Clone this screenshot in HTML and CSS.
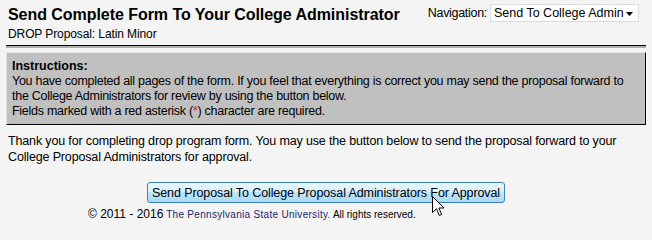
FILE: index.html
```html
<!DOCTYPE html>
<html>
<head>
<meta charset="utf-8">
<link rel="stylesheet" href="styles.css">
</head>
<body>
<div class="page">
  <div class="header">
    <div class="titles">
      <h1 class="title">Send Complete Form To Your College Administrator</h1>
      <div class="subtitle">DROP Proposal: Latin Minor</div>
    </div>
    <div class="nav">
      <span class="nav-label">Navigation:</span>
      <div class="select">
        <span>Send To College Admin</span>
        <svg class="caret" width="7" height="4" viewBox="0 0 7 4"><path d="M0 0H7L3.5 4Z" fill="#000"/></svg>
      </div>
    </div>
  </div>
  <div class="rule"></div>
  <div class="instructions">
    <div class="ins-title">Instructions:</div>
    <div>You have completed all pages of the form. If you feel that everything is correct you may send the proposal forward to the College Administrators for review by using the button below.</div>
    <div>Fields marked with a red asterisk (<span class="req">*</span>) character are required.</div>
  </div>
  <p class="thanks">Thank you for completing drop program form. You may use the button below to send the proposal forward to your College Proposal Administrators for approval.</p>
  <div class="actions">
    <button class="send">Send Proposal To College Proposal Administrators For Approval</button>
  </div>
  <div class="footer"><span class="copy">© 2011 - 2016</span> <span class="psu">The Pennsylvania State University.</span> <span class="rights">All rights reserved.</span></div>
</div>
<svg class="cursor" width="13" height="21" viewBox="0 0 13 21"><path d="M0.5 0.5V16.5L4.5 12.7L7.3 19.5L9.6 18.5L6.9 12H12Z" fill="#fff" stroke="#000" stroke-width="1" stroke-linejoin="miter"/></svg>
</body>
</html>
```
FILE: styles.css
```css
html, body {
  margin: 0;
  padding: 0;
  background: #f4f4f4;
}
body {
  font-family: "Liberation Sans", Arial, sans-serif;
  font-size: 12.5px;
  color: #000;
  position: relative;
  height: 225px;
  overflow: hidden;
}
.page {
  padding: 0 6px;
}
.header {
  display: flex;
  justify-content: space-between;
  align-items: flex-start;
  padding: 5px 7px 0 2px;
}
.titles {
  white-space: nowrap;
}
.title {
  margin: 0;
  font-size: 16px;
  letter-spacing: -0.05px;
  font-weight: bold;
  line-height: 20px;
}
.subtitle {
  margin-top: 2px;
  font-size: 12px;
  letter-spacing: -0.1px;
  line-height: 15px;
}
.nav {
  display: flex;
  align-items: center;
  gap: 3px;
  margin-top: -1px;
  white-space: nowrap;
}
.nav-label {
  letter-spacing: -0.3px;
}
.select {
  display: flex;
  align-items: center;
  justify-content: space-between;
  box-sizing: border-box;
  width: 149px;
  height: 18px;
  padding: 0 5px 0 3px;
  background: #fff;
  border: 1px solid #dcdcdc;
}
.caret {
  margin-top: 2px;
}
.rule {
  margin-top: 3px;
  border-top: 1px solid #000;
  border-bottom: 2px solid #adadad;
}
.instructions {
  margin-top: 4px;
  background: #c0c0c0;
  border-style: solid;
  border-width: 1px;
  border-color: #e3e3e3 #000 #000 #e3e3e3;
  padding: 6px 5px 5px 5px;
  line-height: 15px;
  letter-spacing: -0.27px;
}
.ins-title {
  font-weight: bold;
  letter-spacing: 0;
}
.req {
  color: #f00;
}
.thanks {
  margin: 8px 2px 0 2px;
  line-height: 16px;
  letter-spacing: -0.15px;
}
.actions {
  display: flex;
  justify-content: center;
  margin-top: 17px;
}
.send {
  font-family: "Liberation Sans", Arial, sans-serif;
  font-size: 12.5px;
  letter-spacing: -0.1px;
  height: 21px;
  padding: 0 4px;
  border: 1px solid #3c7fb1;
  border-radius: 3px;
  background: linear-gradient(#eaf6fd 0%, #d9f0fc 45%, #bee6fd 50%, #a7d9f5 100%);
  color: #000;
}
.footer {
  padding-left: 82px;
  margin-top: 4px;
  font-size: 10px;
  line-height: 14px;
  white-space: nowrap;
}
.copy {
  font-size: 12px;
}
.psu {
  color: #1e1e6e;
  letter-spacing: 0.3px;
}
.cursor {
  position: absolute;
  left: 432px;
  top: 196px;
}
```
